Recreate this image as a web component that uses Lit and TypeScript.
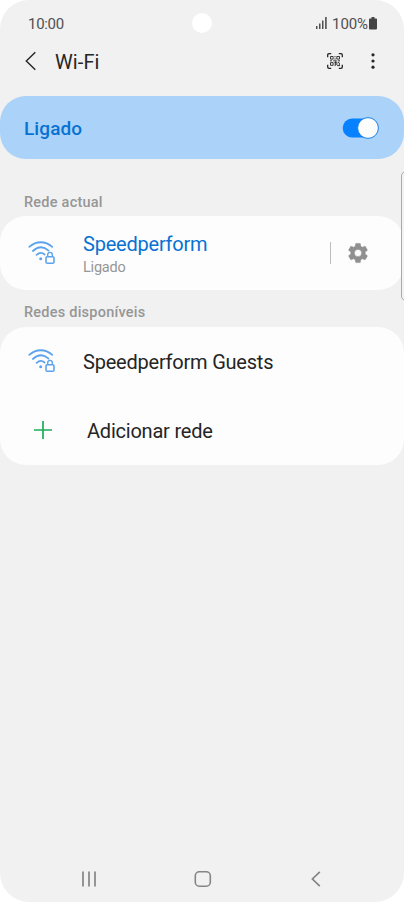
import { LitElement, html, css } from "lit";
import { customElement } from "lit/decorators.js";

const wifiIcon = html`<svg class="wifi" width="28" height="26" viewBox="0 0 28 26" fill="none" stroke="#5ca3ee" stroke-linecap="round">
  <path d="M1.3 6.9C8.3 .7 17.3 .7 24.2 6.9" stroke-width="1.8"/>
  <path d="M4.9 11C10 6.4 15.8 6.4 20.6 10.6" stroke-width="1.8"/>
  <path d="M8.6 14.8C11.4 12.2 14 12.2 16.6 14.5" stroke-width="1.8"/>
  <circle cx="12.7" cy="18.7" r="1.5" fill="#5ca3ee" stroke="none"/>
  <rect x="18" y="16.7" width="8" height="6.5" rx="1.3" stroke-width="1.6"/>
  <path d="M19.7 16.4v-1.7a2.3 2.3 0 0 1 4.6 0v1.7" stroke-width="1.4"/>
</svg>`;

@customElement("app-root")
export class AppRoot extends LitElement {
  static styles = css`
    :host { display: block; width: 405px; height: 902px; overflow: hidden; background: #fff; font-family: Roboto, "Liberation Sans", sans-serif; color: #252525; }
    * { box-sizing: border-box; }
    svg { display: block; flex: none; }
    .screen { position: relative; display: flex; flex-direction: column; width: 404px; height: 902px; background: #f1f1f1; border-radius: 29px; overflow: hidden; }
    .status { display: flex; align-items: center; height: 46px; padding: 0 26px 0 28px; color: #505050; font-size: 15px; line-height: 18px; letter-spacing: -0.3px; }
    .time, .percent { padding-top: 1px; }
    .signals { display: flex; align-items: center; margin-left: auto; }
    .percent { margin: 0 1px 0 4px; letter-spacing: -0.1px; }
    .camera { position: absolute; left: 192px; top: 13px; width: 20px; height: 20px; border-radius: 50%; background: #fff; }
    .header { display: flex; align-items: center; height: 30px; padding: 0 29px 0 25px; }
    .title { margin-left: 18px; font-size: 20px; line-height: 30px; padding-top: 1px; letter-spacing: 0.1px; }
    .scan { margin-left: auto; margin-right: 28px; }
    .master { display: flex; align-items: center; justify-content: space-between; height: 63px; margin-top: 20.3px; padding: 0 25px 0 24px; border-radius: 26px; background: #abd2f9; color: #0872d2; }
    .on { font-size: 19px; font-weight: 500; letter-spacing: 0.1px; padding-top: 2px; }
    .toggle { width: 37px; height: 22px; }
    .label { display: flex; align-items: center; font-size: 14.5px; font-weight: 500; color: #969696; padding: 2px 0 0 24px; letter-spacing: 0.23px; }
    .first { height: 28px; margin-top: 28.7px; }
    .second { height: 28px; margin: 8px 0 1px; }
    .card { background: #fdfdfd; border-radius: 26px; }
    .current { height: 74px; display: flex; align-items: center; padding: 0 35px 0 28px; }
    .names { margin-left: 27px; display: flex; flex-direction: column; padding-top: 4px; }
    .name { font-size: 20px; line-height: 24px; letter-spacing: -0.22px; white-space: nowrap; }
    .blue { color: #0872d2; }
    .sub { font-size: 14.5px; line-height: 18px; margin-top: 3px; color: #969696; letter-spacing: -0.22px; }
    .bar { width: 1px; height: 22px; margin-left: auto; margin-right: 16px; background: #bdbdbd; }
    .row { display: flex; align-items: center; height: 69px; padding-left: 28px; }
    .row .name { margin-left: 27px; padding-top: 2px; }
    .row .add { margin-left: 35px; }
    .plus { margin-left: 6px; }
    .nav { display: flex; align-items: center; height: 20px; margin-top: auto; margin-bottom: 13px; padding: 0 83px 0 81px; justify-content: space-between; }
    .home { margin-right: 3px; }
    .edge { position: absolute; left: 401px; top: 171px; width: 10px; height: 130px; border: 1px solid #aaa; border-radius: 5px; background: #f3f3f3; }
  `;

  render() {
    return html`<main class="screen">
      <div class="status">
        <span class="time">10:00</span>
        <div class="signals">
          <svg width="12" height="12" viewBox="0 0 12 12" fill="#505050"><rect x="0" y="9" width="1.5" height="3"/><rect x="3" y="6.5" width="1.5" height="5.5"/><rect x="6" y="3.5" width="1.5" height="8.5"/><rect x="9.1" y="0" width="1.6" height="12"/></svg>
          <span class="percent">100%</span>
          <svg width="9" height="13" viewBox="0 0 9 13" fill="#444"><path d="M2.5 0h3v1.6H7.3Q8 1.6 8 2.4v8.8Q8 12.4 7 12.4H1Q0 12.4 0 11.2V2.4q0-.8.8-.8h1.7z"/></svg>
        </div>
      </div>
      <div class="camera"></div>
      <header class="header">
        <svg width="12" height="20" viewBox="0 0 12 20" fill="none" stroke="#252525" stroke-width="1.4"><path d="M10.3 1.2 1.3 10l9 8.8"/></svg>
        <span class="title">Wi-Fi</span>
        <svg class="scan" width="16" height="16" viewBox="0 0 16 16" fill="none" stroke="#252525">
          <path stroke-width="1.3" d="M.7 4.2V2Q.7.7 2 .7h2.2M11.8.7H14q1.3 0 1.3 1.3v2.2M.7 11.8V14q0 1.3 1.3 1.3h2.2M11.8 15.3H14q1.3 0 1.3-1.3v-2.2"/>
          <path stroke-width=".9" d="M3.5 3.5h2.6v2.6H3.5zM9.8 3.5h2.7v2.6H9.8zM3.5 9.6h2.6v2.7H3.5z"/>
          <path stroke-width=".9" d="M8 3v1.2M8 5.3v1.4M3 7.8h2M6.2 7.8h3.5M10.8 7.8h2.2M7.4 9.5h2.2M10.6 9.4h1.6M7.5 11h3.2M7.5 12.6h1.2M10 12.6h3M12.4 10v2M8.8 8v4"/>
        </svg>
        <svg width="4" height="16" viewBox="0 0 4 16" fill="#252525"><circle cx="2" cy="1.8" r="1.6"/><circle cx="2" cy="8" r="1.6"/><circle cx="2" cy="14.2" r="1.6"/></svg>
      </header>
      <section class="master">
        <span class="on">Ligado</span>
        <svg class="toggle" viewBox="0 0 37 22"><rect x=".7" y="1.5" width="35" height="19" rx="9.5" fill="#0681ff"/><circle cx="26" cy="11" r="10.4" fill="#fdfdfd" stroke="#1b82e8"/></svg>
      </section>
      <div class="label first">Rede actual</div>
      <section class="card current">
        ${wifiIcon}
        <div class="names"><span class="name blue">Speedperform</span><span class="sub">Ligado</span></div>
        <div class="bar"></div>
        <svg width="22" height="22" viewBox="1 1 22 22" fill="#909090" stroke="#909090" stroke-width=".5"><path d="M19.14 12.94c.04-.3.06-.61.06-.94 0-.32-.02-.64-.07-.94l2.03-1.58a.49.49 0 0 0 .12-.61l-1.92-3.32a.49.49 0 0 0-.59-.22l-2.39.96c-.5-.38-1.03-.7-1.62-.94l-.36-2.54a.48.48 0 0 0-.48-.41h-3.84a.47.47 0 0 0-.47.41l-.36 2.54c-.59.24-1.13.57-1.62.94l-2.39-.96a.48.48 0 0 0-.59.22L2.74 8.87a.47.47 0 0 0 .12.61l2.03 1.58c-.05.3-.09.63-.09.94s.02.64.07.94l-2.03 1.58a.49.49 0 0 0-.12.61l1.92 3.32c.12.22.37.29.59.22l2.39-.96c.5.38 1.03.7 1.62.94l.36 2.54c.05.24.24.41.48.41h3.84c.24 0 .44-.17.47-.41l.36-2.54c.59-.24 1.13-.56 1.62-.94l2.39.96c.22.08.47 0 .59-.22l1.92-3.32a.47.47 0 0 0-.12-.61l-2.01-1.58zM12 15.6a3.6 3.6 0 1 1 0-7.2 3.6 3.6 0 0 1 0 7.2z"/></svg>
      </section>
      <div class="label second">Redes disponíveis</div>
      <section class="card">
        <div class="row">${wifiIcon}<span class="name">Speedperform Guests</span></div>
        <div class="row">
          <svg class="plus" width="18" height="18" viewBox="0 0 18 18" stroke="#1cac59" stroke-width="1.7"><path d="M9 0v18M0 9h18"/></svg>
          <span class="name add">Adicionar rede</span>
        </div>
      </section>
      <nav class="nav">
        <svg width="16" height="16" viewBox="0 0 16 16" stroke="#858585" stroke-width="1.7"><path d="M2 .5v15M8 .5v15M14 .5v15"/></svg>
        <svg class="home" width="18" height="16" viewBox="0 0 18 16" fill="none" stroke="#858585" stroke-width="1.6"><rect x="1.3" y=".8" width="15" height="14.4" rx="4"/></svg>
        <svg width="10" height="16" viewBox="0 0 10 16" fill="none" stroke="#858585" stroke-width="1.7"><path d="M8.8.8 1.4 8l7.4 7.2"/></svg>
      </nav>
      <div class="edge"></div>
    </main>`;
  }
}
